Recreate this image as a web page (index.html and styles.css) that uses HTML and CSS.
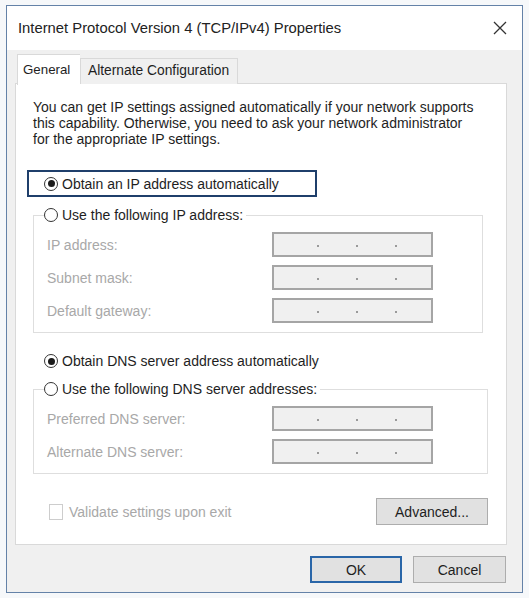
FILE: index.html
```html
<!DOCTYPE html>
<html>
<head>
    <title>Internet Protocol Version 4 (TCP/IPv4) Properties</title>
    <meta charset="utf-8">
    <link rel="stylesheet" href="styles.css">
</head>
<body>
<div class="window">
    <div class="titlebar">
        <span class="title">Internet Protocol Version 4 (TCP/IPv4) Properties</span>
        <svg class="close" width="14" height="14" viewBox="0 0 14 14">
            <path d="M1 1 L13 13 M13 1 L1 13" stroke="#333" stroke-width="1.3" fill="none"/>
        </svg>
    </div>

    <div class="tabs">
        <div class="tab active">General</div>
        <div class="tab">Alternate Configuration</div>
    </div>

    <div class="panel">
        <p class="intro">You can get IP settings assigned automatically if your network supports<br>
            this capability. Otherwise, you need to ask your network administrator<br>
            for the appropriate IP settings.</p>

        <div class="option focused"><span class="radio checked"></span>Obtain an IP address automatically</div>

        <fieldset class="group">
            <legend class="option"><span class="radio"></span>Use the following IP address:</legend>
            <div class="field"><span class="label">IP address:</span>
                <div class="ip"><i></i><i></i><i></i></div></div>
            <div class="field"><span class="label">Subnet mask:</span>
                <div class="ip"><i></i><i></i><i></i></div></div>
            <div class="field"><span class="label">Default gateway:</span>
                <div class="ip"><i></i><i></i><i></i></div></div>
        </fieldset>

        <div class="option dns-auto"><span class="radio checked"></span>Obtain DNS server address automatically</div>

        <fieldset class="group dns">
            <legend class="option"><span class="radio"></span>Use the following DNS server addresses:</legend>
            <div class="field"><span class="label">Preferred DNS server:</span>
                <div class="ip"><i></i><i></i><i></i></div></div>
            <div class="field"><span class="label">Alternate DNS server:</span>
                <div class="ip"><i></i><i></i><i></i></div></div>
        </fieldset>

        <div class="bottom-row">
            <label class="check"><span class="box"></span>Validate settings upon exit</label>
            <button class="btn advanced">Advanced...</button>
        </div>
    </div>

    <div class="footer">
        <button class="btn ok">OK</button>
        <button class="btn cancel">Cancel</button>
    </div>
</div>
</body>
</html>
```

FILE: styles.css
```css
body {
    margin: 0;
    background: #f6f8fa;
    font: 14px "Liberation Sans", Arial, sans-serif;
    color: #1e1e1e;
}

.window {
    box-sizing: border-box;
    width: 517px;
    height: 588px;
    margin: 5px 0 0 6px;
    border: 1px solid #6482a8;
    background: #f0f0f0;
}

/* title bar */
.titlebar {
    height: 44px;
    background: #fff;
    display: flex;
    align-items: center;
    justify-content: space-between;
    padding: 0 15px 0 11px;
}

.title {
    font-size: 14.8px;
    color: #222;
}

/* tab strip */
.tabs {
    display: flex;
    align-items: flex-end;
    height: 34px;
    padding-left: 10px;
    box-sizing: border-box;
}

.tab {
    box-sizing: border-box;
    height: 26px;
    padding: 0 7px;
    line-height: 24px;
    border: 1px solid #d9d9d9;
    border-bottom: none;
    background: #f0f0f0;
    font-size: 13.8px;
    white-space: nowrap;
}

.tab.active {
    position: relative;
    z-index: 1;
    width: 63px;
    height: 31px;
    margin-bottom: -1px;
    padding: 0 5px;
    line-height: 29px;
    font-size: 13.3px;
    background: #fff;
    border-right: none;
}

.tab + .tab {
    width: 158px;
}

/* general page */
.panel {
    box-sizing: border-box;
    height: 462px;
    margin: -1px 0 0 8px;
    width: 492px;
    padding: 15px 17px 0;
    background: #fff;
    border: 1px solid #d9d9d9;
}

.intro {
    margin: 0;
    line-height: 16px;
}

.option {
    display: flex;
    align-items: center;
    height: 16px;
    white-space: nowrap;
}

.option.focused {
    width: 271px;
    height: 23px;
    margin: 23px 0 0 -6px;
    padding-left: 15px;
    border: 2px solid #1f3f6b;
}

.radio {
    box-sizing: border-box;
    width: 14px;
    height: 14px;
    margin-right: 4px;
    border: 1px solid #333;
    border-radius: 50%;
    background: #fff;
    display: flex;
    align-items: center;
    justify-content: center;
}

.radio.checked::after {
    content: "";
    width: 7px;
    height: 7px;
    border-radius: 50%;
    background: #1a1a1a;
}

.group {
    margin: 10px 6px 0 0;
    padding: 9px 0 9px 13px;
    border: 1px solid #dedede;
}

.group legend {
    margin-left: -3px;
    padding: 0 3px 0 0;
}

.group.dns {
    margin: 12px 1px 0 0;
}

.field {
    display: flex;
    align-items: center;
    height: 25px;
}

.field + .field {
    margin-top: 8px;
}

.label {
    width: 225px;
    color: #a8a8a8;
}

.ip {
    box-sizing: border-box;
    width: 161px;
    height: 25px;
    border: 2px solid #a5a5a5;
    background: #f0f0f0;
    display: flex;
    align-items: center;
    padding-left: 43px;
    gap: 37px;
}

.ip i {
    width: 2px;
    height: 2px;
    margin-top: 3px;
    background: #9a9a9a;
}

.dns-auto {
    margin: 20px 0 0 11px;
}

.bottom-row {
    display: flex;
    align-items: center;
    justify-content: space-between;
    height: 27px;
    margin: 24px 1px 0 16px;
}

.check {
    display: flex;
    align-items: center;
    color: #a8a8a8;
}

.check .box {
    box-sizing: border-box;
    width: 14px;
    height: 16px;
    margin-right: 6px;
    border: 1px solid #cdcdcd;
    background: #fff;
}

/* buttons */
.btn {
    box-sizing: border-box;
    height: 27px;
    border: 1px solid #adadad;
    background: #e1e1e1;
    font: 14px "Liberation Sans", Arial, sans-serif;
    color: #1e1e1e;
    padding: 0;
}

.btn.advanced {
    width: 112px;
}

.footer {
    display: flex;
    justify-content: flex-end;
    gap: 11px;
    padding: 11px 16px 0 0;
}

.btn.ok {
    width: 92px;
    border: 2px solid #2a66a8;
}

.btn.cancel {
    width: 93px;
}
```
